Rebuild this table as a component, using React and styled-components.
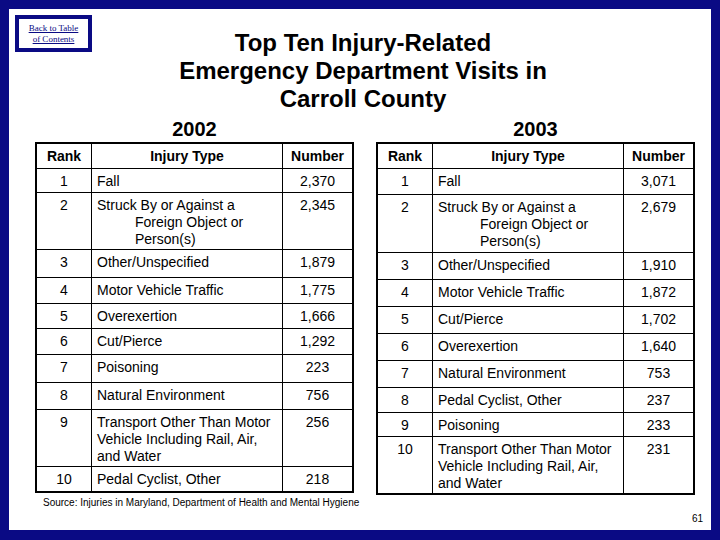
import React from 'react';
import styled, { createGlobalStyle } from 'styled-components';

const NAVY = '#0a0a84';

const GlobalStyle = createGlobalStyle`
  html, body { margin: 0; padding: 0; background: #fff; }
  *, *::before, *::after { box-sizing: border-box; }
  #root { width: 720px; height: 540px; }
`;

const Frame = styled.div`
  width: 720px;
  height: 540px;
  background: ${NAVY};
  padding: 9px 9px 10px 9px;
`;

const Slide = styled.main`
  width: 100%;
  height: 100%;
  background: #fff;
  display: flex;
  flex-direction: column;
  font-family: "Liberation Sans", Arial, sans-serif;
  color: #000;
`;

const Header = styled.header`
  display: grid;
  grid-template-columns: 1fr auto 1fr;
  align-items: start;
  padding: 6px 0 0 6px;
`;

const BackLink = styled.a`
  justify-self: start;
  width: 77px;
  height: 37px;
  border: 4px solid ${NAVY};
  background: #fff;
  display: flex;
  flex-direction: column;
  align-items: center;
  justify-content: center;
  font-family: "Liberation Serif", "Times New Roman", serif;
  font-size: 9px;
  line-height: 11px;
  color: ${NAVY};
  text-decoration: underline;
`;

const Title = styled.h1`
  margin: 14px 0 0;
  font-size: 24px;
  line-height: 28px;
  font-weight: 700;
  text-align: center;
`;

const TablesRow = styled.div`
  display: flex;
  align-items: flex-start;
  gap: 22px;
  padding-left: 26px;
  margin-top: 4px;
`;

const Column = styled.section`
  display: flex;
  flex-direction: column;
  width: 319px;
`;

const Year = styled.h2`
  margin: 0 0 1px;
  font-size: 20px;
  line-height: 24px;
  font-weight: 700;
  text-align: center;
`;

const Grid = styled.div`
  display: grid;
  grid-template-columns: 55px 191px 69px;
  grid-template-rows: ${p => p.$rows};
  border: 2px solid #000;
  font-size: 14px;
  line-height: 17px;
`;

const Row = styled.div`
  display: contents;
  &:last-child > * { border-bottom: none; }
`;

const Cell = styled.div`
  border-right: 1px solid #000;
  border-bottom: 1px solid #000;
  padding: 4px 5px 0 ${p => (p.$hang ? 5 + p.$hang : 5)}px;
  text-indent: ${p => (p.$hang ? -p.$hang : 0)}px;
  text-align: ${p => p.$align || 'left'};
  &:last-child { border-right: none; }
`;

const HeadCell = styled.div`
  border-right: 1px solid #000;
  border-bottom: 1px solid #000;
  display: flex;
  align-items: center;
  justify-content: center;
  font-weight: 700;
  &:last-child { border-right: none; }
`;

const Source = styled.p`
  margin: 4px 0 0;
  padding-left: 8px;
  font-size: 10px;
  line-height: 12px;
  white-space: nowrap;
`;

const PageNumber = styled.footer`
  margin-top: auto;
  padding: 0 8px 5px 0;
  text-align: right;
  font-size: 10px;
  line-height: 12px;
`;

const STRUCK = 'Struck By or Against a Foreign Object or Person(s)';
const TRANSPORT = 'Transport Other Than Motor Vehicle Including Rail, Air, and Water';

const tables = [
  {
    year: '2002',
    hang: 38,
    rows: '25px 24px 57px 28px 26px 25px 26px 28px 27px 57px 24px',
    data: [
      ['1', 'Fall', '2,370'],
      ['2', STRUCK, '2,345'],
      ['3', 'Other/Unspecified', '1,879'],
      ['4', 'Motor Vehicle Traffic', '1,775'],
      ['5', 'Overexertion', '1,666'],
      ['6', 'Cut/Pierce', '1,292'],
      ['7', 'Poisoning', '223'],
      ['8', 'Natural Environment', '756'],
      ['9', TRANSPORT, '256'],
      ['10', 'Pedal Cyclist, Other', '218'],
    ],
    source: true,
  },
  {
    year: '2003',
    hang: 42,
    rows: '25px 26px 58px 27px 27px 27px 27px 27px 25px 24px 56px',
    data: [
      ['1', 'Fall', '3,071'],
      ['2', STRUCK, '2,679'],
      ['3', 'Other/Unspecified', '1,910'],
      ['4', 'Motor Vehicle Traffic', '1,872'],
      ['5', 'Cut/Pierce', '1,702'],
      ['6', 'Overexertion', '1,640'],
      ['7', 'Natural Environment', '753'],
      ['8', 'Pedal Cyclist, Other', '237'],
      ['9', 'Poisoning', '233'],
      ['10', TRANSPORT, '231'],
    ],
  },
];

function InjuryTable({ t }) {
  return (
    <Column>
      <Year>{t.year}</Year>
      <Grid $rows={t.rows}>
        <Row>
          <HeadCell>Rank</HeadCell>
          <HeadCell>Injury Type</HeadCell>
          <HeadCell>Number</HeadCell>
        </Row>
        {t.data.map(([rank, type, num]) => (
          <Row key={rank}>
            <Cell $align="center">{rank}</Cell>
            <Cell $hang={type === STRUCK ? t.hang : 0}>{type}</Cell>
            <Cell $align="center">{num}</Cell>
          </Row>
        ))}
      </Grid>
      {t.source && (
        <Source>Source: Injuries in Maryland, Department of Health and Mental Hygiene</Source>
      )}
    </Column>
  );
}

export default function App() {
  return (
    <>
      <GlobalStyle />
      <Frame>
        <Slide>
          <Header>
            <BackLink href="#">
              <span>Back to Table</span>
              <span>of Contents</span>
            </BackLink>
            <Title>
              Top Ten Injury-Related
              <br />
              Emergency Department Visits in
              <br />
              Carroll County
            </Title>
          </Header>
          <TablesRow>
            {tables.map(t => (
              <InjuryTable key={t.year} t={t} />
            ))}
          </TablesRow>
          <PageNumber>61</PageNumber>
        </Slide>
      </Frame>
    </>
  );
}
